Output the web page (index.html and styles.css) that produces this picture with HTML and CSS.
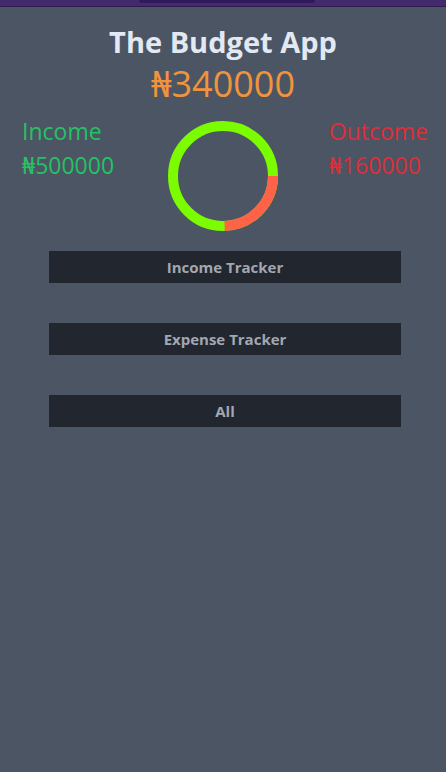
FILE: index.html
```html
<!DOCTYPE html>
<html lang="en">
<head>
<meta charset="utf-8">
<title>The Budget App</title>
<link rel="stylesheet" href="styles.css">
</head>
<body>
<div class="topbar"><div class="topbar-pill"></div></div>
<main class="app">
  <h1 class="title">The Budget App</h1>
  <div class="balance">₦340000</div>
  <section class="summary">
    <div class="stat income">
      <div class="stat-label">Income</div>
      <div class="stat-value">₦500000</div>
    </div>
    <div class="chart">
      <svg width="110" height="110" viewBox="0 0 110 110">
        <circle cx="55" cy="55" r="50" fill="none" stroke="#7cfc00" stroke-width="10"/>
        <path d="M105 55 A50 50 0 0 1 56.6 105" fill="none" stroke="#ff6347" stroke-width="10"/>
      </svg>
    </div>
    <div class="stat outcome">
      <div class="stat-label">Outcome</div>
      <div class="stat-value">₦160000</div>
    </div>
  </section>
  <nav class="actions">
    <button class="btn">Income Tracker</button>
    <button class="btn">Expense Tracker</button>
    <button class="btn">All</button>
  </nav>
</main>
</body>
</html>
```
FILE: styles.css
```css
* { box-sizing: border-box; }
html, body {
  margin: 0;
  height: 100%;
}
body {
  background: #4b5563;
  font-family: "Open Sans", "Noto Sans", sans-serif;
}
.topbar {
  height: 7px;
  background: #43296e;
  border-bottom: 1px solid #2c1c4a;
  display: flex;
  justify-content: center;
}
.topbar-pill {
  width: 176px;
  height: 3px;
  margin-left: 8px;
  background: #301a5c;
  border-radius: 0 0 4px 4px;
}
.app {
  display: flex;
  flex-direction: column;
  align-items: center;
}
.title {
  margin: 17px 0 0;
  font-size: 29px;
  line-height: 36px;
  font-weight: 700;
  color: #e3e9f3;
}
.balance {
  margin-top: 2px;
  font-size: 36px;
  line-height: 44px;
  color: #f0933c;
}
.summary {
  align-self: stretch;
  display: grid;
  grid-template-columns: 1fr 110px 1fr;
  padding: 0 18px;
  margin-top: 8px;
}
.stat-label, .stat-value {
  font-size: 23px;
  line-height: 34px;
  font-weight: 500;
}
.income { color: #27c063; margin-left: 4px; }
.outcome { color: #dc2f3a; justify-self: end; }
.chart { display: flex; margin-top: 7px; }
.actions {
  align-self: stretch;
  display: flex;
  flex-direction: column;
  gap: 40px;
  padding: 0 45px 0 49px;
  margin-top: 20px;
}
.btn {
  height: 32px;
  border: none;
  background: #22262e;
  color: #a2a7b1;
  font-family: inherit;
  font-size: 15px;
  font-weight: 700;
  padding: 0;
}
```
